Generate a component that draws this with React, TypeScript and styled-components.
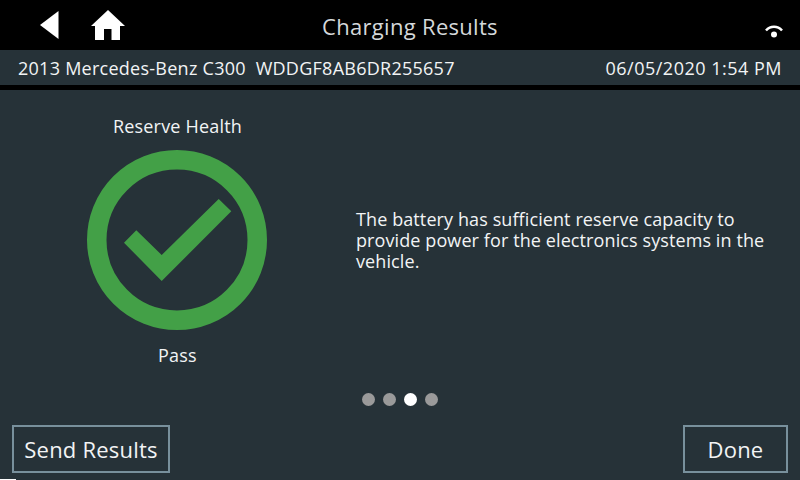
import React from 'react'
import styled, { createGlobalStyle } from 'styled-components'

const GlobalStyle = createGlobalStyle`
  html, body {
    margin: 0;
    padding: 0;
    background: #000;
  }
  body {
    font-family: "Open Sans", "Noto Sans", sans-serif;
    color: #f2f4f5;
  }
`

const Screen = styled.div`
  position: relative;
  width: 800px;
  height: 480px;
  display: flex;
  flex-direction: column;
  overflow: hidden;
  background: #000;
`

const Header = styled.header`
  height: 50px;
  flex: none;
  padding-left: 20px;
  box-sizing: border-box;
  display: grid;
  grid-template-columns: 1fr auto 1fr;
  align-items: center;
`

const NavIcons = styled.div`
  display: flex;
  align-items: center;
  gap: 32px;
  padding-left: 20px;
`

const Title = styled.h1`
  margin: 2px 0 0;
  font-size: 22px;
  font-weight: 400;
  letter-spacing: 0.3px;
  color: #d4d8da;
`

const Status = styled.div`
  display: flex;
  justify-content: flex-end;
  padding: 12px 17px 0 0;
`

const VehicleBar = styled.div`
  height: 35px;
  flex: none;
  margin-bottom: 5px;
  padding: 0 18px;
  display: flex;
  align-items: center;
  justify-content: space-between;
  background: #263238;
  font-size: 18px;
  letter-spacing: 0.26px;
  white-space: pre;
`

const DateTime = styled.span`
  letter-spacing: 0.5px;
`

const Body = styled.main`
  flex: 1;
  display: flex;
  flex-direction: column;
  background: #263238;
`

const Content = styled.div`
  height: 300px;
  display: flex;
`

const Gauge = styled.section`
  width: 356px;
  flex: none;
  padding: 25px 1px 0 0;
  box-sizing: border-box;
  display: flex;
  flex-direction: column;
  align-items: center;
  font-size: 18px;
`

const GaugeLabel = styled.div`
  line-height: 22px;
  letter-spacing: 0.2px;
`

const GaugeIcon = styled.svg`
  display: block;
  margin: 13px 0 14px -2px;
`

const Message = styled.p`
  margin: 119px 0 0;
  width: 425px;
  font-size: 18px;
  line-height: 21px;
  letter-spacing: 0.1px;
`

const Dots = styled.div`
  display: flex;
  justify-content: center;
  gap: 8px;
  margin-top: 3px;
`

const Dot = styled.span<{ $active?: boolean }>`
  width: 13px;
  height: 13px;
  border-radius: 50%;
  background: ${(p) => (p.$active ? '#ffffff' : '#9a9a9a')};
`

const Footer = styled.footer`
  display: flex;
  justify-content: space-between;
  padding: 19px 12px 0;
`

const ActionButton = styled.button<{ $width: number }>`
  width: ${(p) => p.$width}px;
  height: 48px;
  padding: 0;
  box-sizing: border-box;
  border: 2px solid #78909c;
  background: transparent;
  color: #f2f4f5;
  font-family: inherit;
  font-size: 22px;
  letter-spacing: 0.2px;
`

const CornerMark = styled.div`
  position: absolute;
  left: 0;
  bottom: 0;
  width: 16px;
  height: 1px;
  background: #fff;
`

const App = () => {
  return (
    <Screen>
      <GlobalStyle />
      <Header>
        <NavIcons>
          <svg width="19" height="28" viewBox="0 0 19 28">
            <polygon points="18.5,0 18.5,28 0,14" fill="#fff" />
          </svg>
          <svg width="34" height="30" viewBox="0 0 34 30">
            <path
              d="M17 0 L34 16 H29 V30 H20.5 V19 H13 V30 H4 V16 H0 Z"
              fill="#fff"
            />
          </svg>
        </NavIcons>
        <Title>Charging Results</Title>
        <Status>
          <svg width="18" height="14" viewBox="0 0 18 14">
            <path
              d="M1 6.5 C5.5 1.5 12.5 1.5 17 6.5"
              fill="none"
              stroke="#fff"
              strokeWidth="2.6"
            />
            <circle cx="9" cy="10.5" r="3" fill="#fff" />
          </svg>
        </Status>
      </Header>
      <VehicleBar>
        <span>2013 Mercedes-Benz C300  WDDGF8AB6DR255657</span>
        <DateTime>06/05/2020 1:54 PM</DateTime>
      </VehicleBar>
      <Body>
        <Content>
          <Gauge>
            <GaugeLabel>Reserve Health</GaugeLabel>
            <GaugeIcon width="180" height="180" viewBox="0 0 180 180">
              <circle
                cx="90"
                cy="90"
                r="80.25"
                fill="none"
                stroke="#43a047"
                strokeWidth="19.5"
              />
              <polygon
                points="37,92.7 49.3,80.3 74.7,105 131.7,49 144.3,61.3 74.7,131"
                fill="#43a047"
              />
            </GaugeIcon>
            <GaugeLabel>Pass</GaugeLabel>
          </Gauge>
          <Message>
            The battery has sufficient reserve capacity to provide power for the
            electronics systems in the vehicle.
          </Message>
        </Content>
        <Dots>
          <Dot />
          <Dot />
          <Dot $active />
          <Dot />
        </Dots>
        <Footer>
          <ActionButton $width={158}>Send Results</ActionButton>
          <ActionButton $width={105}>Done</ActionButton>
        </Footer>
      </Body>
      <CornerMark />
    </Screen>
  )
}

export default App
